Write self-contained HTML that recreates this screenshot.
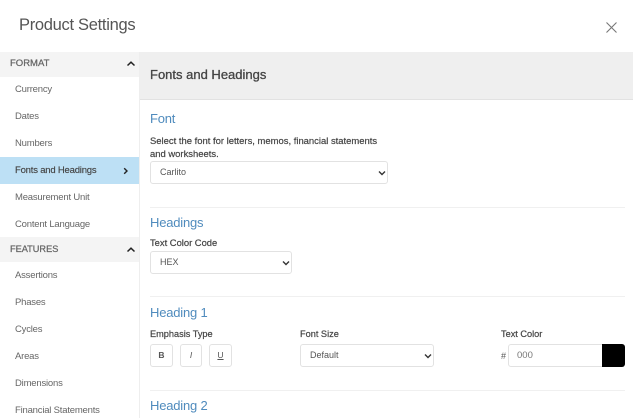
<!DOCTYPE html>
<html><head><meta charset="utf-8"><style>
html,body{margin:0;padding:0;background:#fff;width:633px;height:418px;overflow:hidden;font-family:"Liberation Sans",sans-serif}
#r{position:relative;width:633px;height:418px;overflow:hidden}
.a{position:absolute;white-space:nowrap}
.n{left:15px;font-size:9.5px;letter-spacing:-.2px;color:#666;line-height:12px}
.h{left:150px;font-size:13px;letter-spacing:-.2px;color:#4f8bbd;line-height:16px}
.l{font-size:9.2px;color:#444;line-height:12px;font-weight:400;-webkit-text-stroke:.2px #444}
.s{font-size:9px;color:#555;border:1px solid #e2e2e2;border-radius:3px;background:#fff;box-sizing:border-box;height:23px;line-height:21px;padding-left:9px}
.b{top:344px;width:23px;height:23px;border:1px solid #e2e2e2;border-radius:3px;box-sizing:border-box;text-align:center;font-size:8.5px;line-height:21px;color:#555}
.hr{left:150px;right:8px;height:1px;background:#f0f0f0}
</style></head><body><div id="r">
<div class="a" style="left:19px;top:15px;font-size:16.5px;letter-spacing:-.3px;line-height:20px;color:#555">Product Settings</div>
<svg class="a" style="left:605px;top:21px" width="13" height="13" viewBox="0 0 13 13"><path d="M1.5 1.5L11.5 11.5M11.5 1.5L1.5 11.5" stroke="#777" stroke-width="1.1" fill="none"/></svg>

<div class="a" style="left:0;top:52px;width:633px;height:47px;background:#efefef;border-bottom:1px solid #e2e2e2"></div>
<div class="a" style="left:0;top:52px;width:139px;height:366px;background:#fff"></div>
<div class="a" style="left:139px;top:52px;width:1px;height:366px;background:#eee"></div>
<div class="a" style="left:0;top:52px;width:139px;height:25px;background:#f4f4f4"></div>
<div class="a" style="left:0;top:237px;width:139px;height:25px;background:#f4f4f4"></div>
<div class="a" style="left:0;top:157px;width:139px;height:27px;background:#bde0f5"></div>

<div class="a" style="left:10px;top:58px;font-size:9.5px;line-height:12px;color:#666;-webkit-text-stroke:.25px #666">FORMAT</div>
<svg class="a" style="left:126px;top:60px" width="10" height="7" viewBox="0 0 10 7"><path d="M1.5 5.5L5 2.2L8.5 5.5" stroke="#222" stroke-width="1.5" fill="none"/></svg>
<div class="a n" style="top:84px">Currency</div>
<div class="a n" style="top:111px">Dates</div>
<div class="a n" style="top:138px">Numbers</div>
<div class="a n" style="top:165px;color:#444;-webkit-text-stroke:.15px #444">Fonts and Headings</div>
<svg class="a" style="left:122px;top:166px" width="7" height="10" viewBox="0 0 7 10"><path d="M2.2 2.2L5 5L2.2 7.8" stroke="#222" stroke-width="1.4" fill="none"/></svg>
<div class="a n" style="top:192px">Measurement Unit</div>
<div class="a n" style="top:219px">Content Language</div>
<div class="a" style="left:10px;top:243px;font-size:9.2px;line-height:12px;color:#666;-webkit-text-stroke:.25px #666">FEATURES</div>
<svg class="a" style="left:126px;top:246px" width="10" height="7" viewBox="0 0 10 7"><path d="M1.5 5.5L5 2.2L8.5 5.5" stroke="#222" stroke-width="1.5" fill="none"/></svg>
<div class="a n" style="top:270px">Assertions</div>
<div class="a n" style="top:297px">Phases</div>
<div class="a n" style="top:324px">Cycles</div>
<div class="a n" style="top:351px">Areas</div>
<div class="a n" style="top:378px">Dimensions</div>
<div class="a n" style="top:405px">Financial Statements</div>

<div class="a" style="left:150px;top:67px;font-size:13px;line-height:16px;color:#444;-webkit-text-stroke:.3px #444">Fonts and Headings</div>

<div class="a h" style="top:111px">Font</div>
<div class="a l" style="left:150px;top:135.5px;font-size:9.45px">Select the font for letters, memos, financial statements</div>
<div class="a l" style="left:150px;top:149px;font-size:9.45px">and worksheets.</div>
<div class="a s" style="left:150px;top:161px;width:238px">Carlito</div>
<svg class="a" style="left:378px;top:170px" width="8" height="6" viewBox="0 0 8 6"><path d="M1 1.5L4 4.5L7 1.5" stroke="#333" stroke-width="1.4" fill="none"/></svg>
<div class="a hr" style="top:207px"></div>

<div class="a h" style="top:214.5px">Headings</div>
<div class="a l" style="left:150px;top:237px;font-size:9.4px">Text Color Code</div>
<div class="a s" style="left:150px;top:251px;width:142px">HEX</div>
<svg class="a" style="left:282px;top:260px" width="8" height="6" viewBox="0 0 8 6"><path d="M1 1.5L4 4.5L7 1.5" stroke="#333" stroke-width="1.4" fill="none"/></svg>
<div class="a hr" style="top:296px"></div>

<div class="a h" style="top:304.5px">Heading 1</div>
<div class="a l" style="left:150px;top:328px">Emphasis Type</div>
<div class="a b" style="left:150px;font-weight:700">B</div>
<div class="a b" style="left:180px;width:22px;font-style:italic">I</div>
<div class="a b" style="left:209px;text-decoration:underline">U</div>
<div class="a l" style="left:300px;top:328px">Font Size</div>
<div class="a s" style="left:300px;top:344px;width:134px">Default</div>
<svg class="a" style="left:424px;top:353px" width="8" height="6" viewBox="0 0 8 6"><path d="M1 1.5L4 4.5L7 1.5" stroke="#333" stroke-width="1.4" fill="none"/></svg>
<div class="a l" style="left:501px;top:328px">Text Color</div>
<div class="a" style="left:501px;top:350px;font-size:9px;line-height:12px;color:#555">#</div>
<div class="a s" style="left:508px;top:344px;width:95px;padding-left:8px;border-radius:3px 0 0 3px;font-size:9.5px;color:#777">000</div>
<div class="a" style="left:602px;top:344px;width:23px;height:23px;background:#000;border-radius:0 3px 3px 0"></div>
<div class="a hr" style="top:390px"></div>

<div class="a h" style="top:398px">Heading 2</div>
</div></body></html>
